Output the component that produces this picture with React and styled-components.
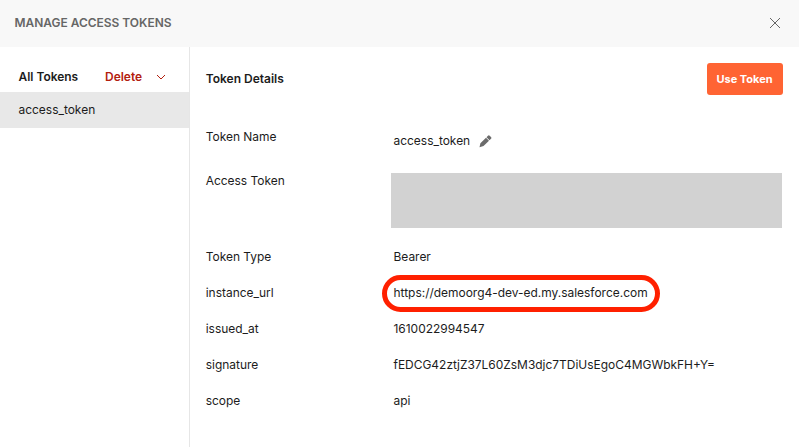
import React from "react";
import styled, { createGlobalStyle } from "styled-components";

const Global = createGlobalStyle`
  *, *::before, *::after { box-sizing: border-box; }
  body { margin: 0; background: #fff; font: 11.96px/18px Inter, sans-serif; color: #1c1c1c; overflow: hidden; }
`;
const Modal = styled.div`
  width: 799px; height: 447px; display: flex; flex-direction: column; background: #fff;
`;
const Header = styled.header`
  height: 47px; flex: none; display: flex; align-items: center; justify-content: space-between;
  padding: 0 18px 2px 14.5px; background: #f8f8f8; 
`;
const Title = styled.h1`
  margin: 0; font-size: 11.96px; line-height: 18px; font-weight: 600; color: #666; white-space: nowrap;
`;
const IconButton = styled.button`
  display: flex; padding: 0; border: 0; background: none; color: ${(p) => p.$color};
`;
const Body = styled.div`flex: 1; min-height: 0; display: flex;`;
const Sidebar = styled.aside`width: 190px; flex: none; border-right: 1px solid #e6e6e6;`;
const SidebarTop = styled.div`
  height: 45px; display: flex; align-items: center; padding: 14px 0 0 18.5px; font-weight: 600;
`;
const AllTokens = styled.span`width: 86.5px;`;
const Delete = styled.span`width: 51px; color: #b3200f;`;
const TokenItem = styled.div`
  height: 36px; display: flex; align-items: center; padding-left: 18.5px; background: #e8e8e8;
`;
const Details = styled.main`flex: 1; padding: 16px 16px 0 15.7px;`;
const DetailsTop = styled.div`display: flex; justify-content: space-between; align-items: center; height: 32px;`;
const Heading = styled.h2`margin: 0; font-size: 12px; line-height: 18px; font-weight: 600;`;
const UseButton = styled.button`
  width: 76px; height: 32px; padding: 0 1px 0 0; border: 0; border-radius: 3px; background: #ff6433; color: #fff;
  font: 700 11px Inter, sans-serif; white-space: nowrap;
`;
const Fields = styled.dl`
  margin: 24px 0 0; display: grid; grid-template-columns: 185.3px 1fr;
  grid-template-rows: 44px 85px repeat(5, 36px);
`;
const Label = styled.dt`margin: 0; padding-top: ${(p) => p.$top}px; white-space: nowrap;`;
const Value = styled.dd`
  margin: 0; padding: ${(p) => p.$top}px 0 0 2.5px; display: flex; align-items: flex-start; gap: 9px; white-space: nowrap;
`;
const RedactedCell = styled.dd`margin: 0; padding-top: 10px;`;
const Redacted = styled.div`width: 391px; height: 55px; background: #d2d2d2;`;
const Marked = styled.span`
  position: relative;
  &::after {
    content: ""; position: absolute; left: -11.5px; top: -9px; width: 278px; height: 37px;
    border: 5px solid #ff2000; border-radius: 18.5px;
  }
`;
const Glyph = styled.svg`display: block; margin-top: ${(p) => p.$top || 0}px;`;

const rows = [
  ["Token Type", "Bearer"],
  ["instance_url", "https://demoorg4-dev-ed.my.salesforce.com", true],
  ["issued_at", "1610022994547"],
  ["signature", "fEDCG42ztjZ37L60ZsM3djc7TDiUsEgoC4MGWbkFH+Y="],
  ["scope", "api"],
];

export default function App() {
  return (
    <Modal>
      <Global />
      <Header>
        <Title>MANAGE ACCESS TOKENS</Title>
        <IconButton $color="#666" aria-label="Close">
          <Glyph width="12" height="12" viewBox="0 0 12 12" fill="none" stroke="currentColor">
            <path d="M1 1 11 11M11 1 1 11" />
          </Glyph>
        </IconButton>
      </Header>
      <Body>
        <Sidebar>
          <SidebarTop>
            <AllTokens>All Tokens</AllTokens>
            <Delete>Delete</Delete>
            <IconButton $color="#b3200f" aria-label="Delete options">
              <Glyph width="10" height="6" viewBox="0 0 10 6" fill="none" stroke="currentColor">
                <path d="M1 1 5 5 9 1" />
              </Glyph>
            </IconButton>
          </SidebarTop>
          <TokenItem>access_token</TokenItem>
        </Sidebar>
        <Details>
          <DetailsTop>
            <Heading>Token Details</Heading>
            <UseButton>Use Token</UseButton>
          </DetailsTop>
          <Fields>
            <Label $top={9}>Token Name</Label>
            <Value $top={13}>
              access_token
              <Glyph $top={3} width="13" height="13" viewBox="0 0 13 13" fill="#6b6b6b">
                <path d="M1.4 8.2 7 2.7 10 5.7 4.5 11.1.5 12.3ZM7.5 2.2 9 .7Q9.8-.1 10.7.8L12 2.1Q12.8 2.9 12 3.7L10.5 5.2Z" />
              </Glyph>
            </Value>
            <Label $top={9}>Access Token</Label>
            <RedactedCell><Redacted /></RedactedCell>
            {rows.map(([name, value, marked]) => (
              <React.Fragment key={name}>
                <Label $top={0}>{name}</Label>
                <Value $top={0}>{marked ? <Marked>{value}</Marked> : value}</Value>
              </React.Fragment>
            ))}
          </Fields>
        </Details>
      </Body>
    </Modal>
  );
}
